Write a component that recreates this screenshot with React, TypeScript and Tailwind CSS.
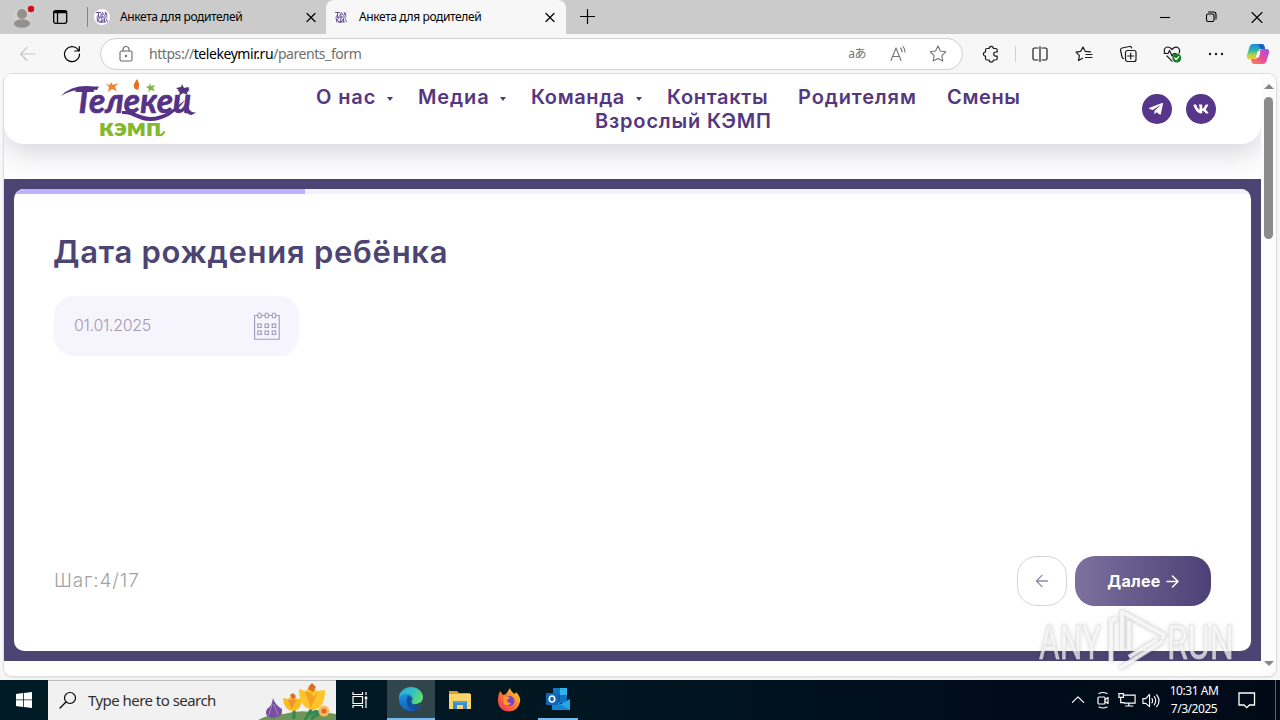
import type { ReactNode } from "react";
import { clsx } from "clsx";
import { FaTelegramPlane, FaVk } from "react-icons/fa";

interface IconProps {
  size?: number;
  className?: string;
  width?: number;
  children: ReactNode;
}

const Icon = ({ size = 20, className, width = 1.1, children }: IconProps) => (
  <svg
    width={size}
    height={size}
    viewBox="0 0 20 20"
    fill="none"
    stroke="currentColor"
    strokeWidth={width}
    strokeLinecap="round"
    strokeLinejoin="round"
    className={clsx("block shrink-0", className)}
  >
    {children}
  </svg>
);

const CloseIcon = () => (
  <Icon width={1.2}>
    <path d="M6 6.500l8 8M14 6.500l-8 8" />
  </Icon>
);

const Favicon = () => (
  <svg width="16" height="16" viewBox="0 0 16 16" className="block shrink-0">
    <circle cx="8" cy="8" r="8" fill="#fbfaff" />
    <g fill="none" stroke="#67539a" strokeWidth="1">
      <path d="M2 3.500h5M4.500 3v4M6.500 6.500l2-3 2 3M11 3l2 4M13 3.500l-2 3M2.500 8h11M3.500 6.500l2 3M8 5v4" />
      <path d="M3 9l1 4.500M3.500 11l3-2.500M4 11l3 2.500M8 9l-.5 4.500 3-4V13M12 9.500l1.500 3.500M5 13h7" />
    </g>
  </svg>
);

interface BrowserTabProps {
  active?: boolean;
}

const BrowserTab = ({ active }: BrowserTabProps) => (
  <div
    className={clsx(
      "flex h-[34px] items-center pl-[7px]",
      active ? "w-[240px] rounded-t-lg bg-[#f7f7f7]" : "w-[239px]"
    )}
  >
    <Favicon />
    <span className="ml-[10px] w-[181px] text-[12px] leading-4 tracking-[-0.38px] whitespace-nowrap text-black">
      Анкета для родителей
    </span>
    <CloseIcon />
  </div>
);

const TabStrip = () => (
  <div className="flex h-[34px] items-center bg-[#cbcbcb] text-black">
    <svg width="26" height="24" viewBox="0 0 26 24" className="ml-[11px]">
      <circle cx="11" cy="12" r="10" fill="#d2d0ce" />
      <circle cx="11" cy="9" r="5" fill="#93908e" />
      <ellipse cx="11" cy="18.500" rx="8" ry="4.200" fill="#93908e" />
      <circle cx="20" cy="4" r="3.200" fill="#d80b1c" />
    </svg>
    <Icon className="ml-[13px]" width={1.3}>
      <rect x="3.700" y="3.700" width="13" height="12.600" rx="2" />
      <path d="M7.500 5.500V16" />
      <path d="M4.500 5h11.500" strokeWidth={2.400} />
    </Icon>
    <div className="ml-[17px] h-5 w-px bg-[#858585]" />
    <div className="-ml-[1px] flex">
      <BrowserTab />
      <BrowserTab active />
    </div>
    <Icon className="ml-[11px]" width={1.2}>
      <path d="M3.500 9.500h14M10.500 2.500v14" />
    </Icon>
    <div className="mr-[13px] ml-auto flex items-center gap-[26px]">
      <Icon>
        <path d="M5 10.500h10" strokeLinecap="butt" />
      </Icon>
      <Icon>
        <rect x="5.500" y="7" width="7.500" height="7.500" rx="1.500" />
        <path d="M7.500 5h5a2.500 2.500 0 0 1 2.500 2.500V12" />
      </Icon>
      <Icon>
        <path d="M5 5.500l10 10M15 5.500l-10 10" />
      </Icon>
    </div>
  </div>
);

const STAR = "M10 2l2.400 5 5.400.8-3.900 3.800.9 5.400L10 14.500 5.200 17l.9-5.400L2.200 7.800 7.600 7z";

const CopilotLogo = () => (
  <svg width="24" height="22" viewBox="0 0 24 22" className="block">
    <defs>
      <linearGradient id="copilotLeft" x1="0" y1="0" x2="0" y2="1">
        <stop offset="0" stopColor="#1689e8" />
        <stop offset=".45" stopColor="#35b8a5" />
        <stop offset=".75" stopColor="#b9d543" />
        <stop offset="1" stopColor="#f6c51f" />
      </linearGradient>
      <linearGradient id="copilotRight" x1="1" y1="0" x2="0" y2="1">
        <stop offset="0" stopColor="#9a52e8" />
        <stop offset=".5" stopColor="#ec4a9c" />
        <stop offset="1" stopColor="#fb8a4e" />
      </linearGradient>
    </defs>
    <path d="M7 1h9q2 0 2.500 2.500L19 6h-4q-2 0-2.500 2l-1.600 5.500Q10 16 7.500 16H4q-4 0-3-4L3.500 4Q4.500 1 7 1z" fill="url(#copilotLeft)" />
    <path d="M17 21H8q-2 0-2.500-2.500L5 16h4q2 0 2.500-2l1.600-5.500Q14 6 16.500 6H20q4 0 3 4l-2.500 8Q19.500 21 17 21z" fill="url(#copilotRight)" />
    <path d="M12 1h4q2 0 2.500 2.500L19 6h-4.500z" fill="#1560c8" />
    <path d="M11.500 8.500h3l-1.600 6h-3z" fill="#fff" />
  </svg>
);

const Toolbar = () => (
  <div className="flex h-[40px] items-center bg-[#f7f7f7] text-[#1b1b1b]">
    <Icon className="ml-[18px] text-[#c6c6c6]" size={20}>
      <path d="M17 10H2.500M9 3.500L2.500 10 9 16.500" />
    </Icon>
    <Icon className="ml-[24px] text-black" size={20} width={1.2}>
      <path d="M16.800 7A7.500 7.500 0 1 0 17.500 10M17.300 2.500V7h-4.500" />
    </Icon>
    <div className="ml-[18px] flex h-[32px] w-[863px] items-center rounded-full border border-[#cfcfcf] bg-white pl-[15px]">
      <Icon className="text-[#6b6b6b]">
        <rect x="4" y="7" width="12" height="10" rx="1.500" />
        <path d="M7 7V5.500a3 3 0 0 1 6 0V7" />
        <circle cx="10" cy="12" r=".6" fill="currentColor" />
      </Icon>
      <span className="ml-[13px] text-[14px] leading-5 tracking-[-0.44px] text-[#6f6f6f]">
        https://<span className="text-black">telekeymir.ru</span>/parents_form
      </span>
      <div className="mr-[14px] ml-auto flex items-center text-[#747474]">
        <span className="text-[12px] leading-5 tracking-[-0.5px]">aあ</span>
        <Icon className="ml-[22px]">
          <path d="M3 16.500L8 4l5 12.500M5 12.500h6M12.500 4a5 5 0 0 1 1.500 4M15 2.500a8 8 0 0 1 2 5.500" />
        </Icon>
        <Icon className="ml-[20px]">
          <path d={STAR} />
        </Icon>
      </div>
    </div>
    <Icon className="ml-[18px]" width={1.2}>
      <path d="M6 4.500h2.200a2.100 2.100 0 0 1 4.200 0h2.300a1.500 1.500 0 0 1 1.500 1.500v2h-1.400a2 2 0 0 0 0 4.200h1.400v2.300a1.500 1.500 0 0 1-1.500 1.500h-2.300a2.100 2.100 0 0 1-4.200 0H6a1.500 1.500 0 0 1-1.500-1.500v-2.300a2.100 2.100 0 0 1 0-4.200V6A1.500 1.500 0 0 1 6 4.500z" />
    </Icon>
    <div className="ml-[14px] h-4 w-px bg-[#cfcfcf]" />
    <Icon className="ml-[14px]" width={1.2}>
      <path d="M8 4H4.500A1.500 1.500 0 0 0 3 5.500v9A1.500 1.500 0 0 0 4.500 16H8M12 4h3.500A1.500 1.500 0 0 1 17 5.500v9a1.500 1.500 0 0 1-1.500 1.500H12M10 2.500v15" />
    </Icon>
    <Icon className="ml-[24px]" width={1.2}>
      <path d="M8.500 14.200L4.500 16.500l.9-4.900L2 8.100l4.700-.7L9 3l2.100 4.300 5.400.5M12 10.500H18M11.500 13.500H18" />
    </Icon>
    <Icon className="ml-[24px]" width={1.2}>
      <rect x="7.500" y="6.500" width="10.500" height="11" rx="2" />
      <path d="M12.700 9v6M9.700 12h6M5.500 14.500A2 2 0 0 1 4 13L2.500 6a2 2 0 0 1 1.500-2l7.500-1.500q1.700-.3 2.200 1.500" />
    </Icon>
    <Icon className="ml-[24px]" width={1.2}>
      <path d="M3 9C.5 4.500 5 1.500 8.500 4L10 5.500 11.500 4C15 1.500 19 4.500 17.200 9M5 12l5 5.200M2 9.500h4l1.500-3L10 12l1.500-2.500H14" />
      <circle cx="14.800" cy="14" r="4.500" fill="#128026" stroke="none" />
      <path d="M12.700 14l1.500 1.500 2.600-2.800" stroke="#fff" />
    </Icon>
    <Icon className="ml-[24px]">
      <g fill="currentColor" stroke="none">
        <circle cx="4" cy="10" r="1.200" />
        <circle cx="10" cy="10" r="1.200" />
        <circle cx="16" cy="10" r="1.200" />
      </g>
    </Icon>
    <div className="ml-[20px]">
      <CopilotLogo />
    </div>
  </div>
);

const Logo = () => (
  <svg width="140" height="60" viewBox="0 0 140 60" className="block overflow-visible">
    <path d="M1 18Q12 6 34 8.500l5 0-2 3.500Q14 9 1 18z" fill="#553285" />
    <path d="M62 33c12-1 17 5 28 6 14 0 24-8 35-17-9 13-21 21-35 21-12 0-18-8-28-7z" fill="#553285" />
    <path d="M128 29q3 7 8 5-5 6-10 0z" fill="#553285" />
    <text
      x="14"
      y="35"
      fill="#553285"
      stroke="#553285"
      strokeWidth=".7"
      fontFamily="Lato, sans-serif"
      fontSize="34"
      fontWeight="700"
      fontStyle="italic"
      textLength="117"
      lengthAdjust="spacingAndGlyphs"
    >
      Телекей
    </text>
    <path d="M51 4l2 3 5-2-3 4 2 4-5-2-4 3 1-5-3-3 4 1z" fill="#ec8431" />
    <path d="M75 11c-3-3 0-7 2-10 2 3 3 7 1 11z" fill="#ec6f20" />
    <path d="M90 5l1 3 4-1-2 3 2 3-4-1-3 2 1-3-3-2 3-1z" fill="#80b744" />
    <path d="M122 6l2 4 5-1-3 4 2 4-5-2-4 3 1-5-4-3 5-1z" fill="#573480" />
    <text
      x="39"
      y="58"
      fill="#84b92c"
      fontFamily="Lato, sans-serif"
      fontSize="24"
      fontWeight="800"
      textLength="62"
      lengthAdjust="spacingAndGlyphs"
    >
      кэмп
    </text>
    <path d="M99 57q3 1 5-3" fill="none" stroke="#84b92c" strokeWidth="2" strokeLinecap="round" />
  </svg>
);

const navItems = [
  { label: "О нас", className: "w-[60px] tracking-[0.9px]", gap: "mr-[25px]", menu: true },
  { label: "Медиа", className: "w-[71px] tracking-[0.9px]", gap: "mr-[25px]", menu: true },
  { label: "Команда", className: "w-[94px] tracking-[0.6px]", gap: "mr-[25px]", menu: true },
  { label: "Контакты", className: "w-[101px] tracking-[0.65px]", gap: "mr-[30px]" },
  { label: "Родителям", className: "w-[119px] tracking-[0.88px]", gap: "mr-[30px]" },
  { label: "Смены", className: "w-[74px] tracking-[0.65px]", gap: "" },
];

const SiteHeader = () => (
  <header className="relative flex h-[70px] items-start rounded-b-[20px] bg-white shadow-[0_8px_30px_rgba(54,48,90,0.22)]">
    <div className="mt-[4px] ml-[56px]">
      <Logo />
    </div>
    <nav className="mt-[11px] ml-[116px] w-[706px] font-[Inter,sans-serif] text-[20px] leading-6 font-semibold whitespace-nowrap text-[#553780]">
      <div className="flex">
        {navItems.map((item) => (
          <a key={item.label} className={clsx("flex items-center", item.gap)}>
            <span className={item.className}>{item.label}</span>
            {item.menu && (
              <span className="mt-[3px] ml-[11px] border-x-[3px] border-t-4 border-x-transparent border-t-[#553780]" />
            )}
          </a>
        ))}
      </div>
      <a className="ml-[279px] block tracking-[0.83px]">Взрослый КЭМП</a>
    </nav>
    <div className="mt-[20px] ml-[120px] flex gap-[14px] text-white">
      <a className="flex size-[30px] items-center justify-center rounded-full bg-[#56358a]">
        <FaTelegramPlane size={16} className="mr-[2px]" />
      </a>
      <a className="flex size-[30px] items-center justify-center rounded-full bg-[#56358a]">
        <FaVk size={16} />
      </a>
    </div>
  </header>
);

const CalendarIcon = () => (
  <svg width="26" height="28" viewBox="0 0 26 28" fill="none" stroke="#a19bbd" strokeWidth="1.100" className="block">
    <path d="M4 3.500H.6v23.700h24.600V3.500H22M7.500 3.500h3.500M15 3.500h3.500" />
    {[3.800, 11, 18.200].map((x) => (
      <g key={x}>
        <rect x={x} y="1" width="3.500" height="5" rx="1.700" />
        <rect x={x} y="12" width="3.500" height="3.500" />
        <rect x={x} y="19" width="3.500" height="3.500" />
      </g>
    ))}
  </svg>
);

const FormStep = () => (
  <section className="mt-[35px] h-[482px] bg-[#4c4573] p-[10px]">
    <div className="flex h-full flex-col overflow-hidden rounded-[10px] bg-white font-[Inter,sans-serif]">
      <div className="h-[5px] bg-[#f3effd]">
        <div className="h-full w-[291px] bg-[#c0b0fa]" />
      </div>
      <div className="flex grow flex-col px-10 pb-[45px]">
        <h1 className="mt-[38px] -ml-px text-[31px] leading-[40px] font-semibold tracking-[0.73px] whitespace-nowrap text-[#4c4573]">
          Дата рождения ребёнка
        </h1>
        <div className="mt-[24px] flex h-[60px] w-[245px] items-center justify-between rounded-[20px] bg-[#f6f4fd] pr-[19px] pl-5">
          <span className="-mt-[2px] text-[16px] leading-6 font-light tracking-[-0.3px] text-[#a09cae]">01.01.2025</span>
          <CalendarIcon />
        </div>
        <div className="mt-auto flex h-[50px] items-center">
          <span className="text-[19px] leading-6 font-light tracking-[0.9px] text-[#a2a2a2]">Шаг:4/17</span>
          <button className="ml-auto flex h-[50px] w-[50px] items-center justify-center rounded-[20px] border border-[#d5d2df] text-[#8f88ad]">
            <Icon size={14} width={1.8}>
              <path d="M18 10H2M10 2l-8 8 8 8" />
            </Icon>
          </button>
          <button className="ml-2 flex h-[50px] w-[136px] items-center justify-center gap-[5px] rounded-[20px] bg-gradient-to-r from-[#7c719e] to-[#4c4175] text-[16px] font-bold tracking-[0.3px] text-white">
            Далее
            <Icon size={13} width={2.3}>
              <path d="M1.500 10h17M10 1.500l8.500 8.500-8.500 8.500" />
            </Icon>
          </button>
        </div>
      </div>
    </div>
  </section>
);

const Scrollbar = () => (
  <div className="flex w-[15px] flex-col items-center bg-[#fcfcfc]">
    <div className="mt-[10px] border-x-[5px] border-b-[5px] border-x-transparent border-b-[#868686]" />
    <div className="mt-[8px] h-[142px] w-[9px] rounded-full bg-[#8b8b8b]" />
    <div className="mt-auto mb-[10px] border-x-[5px] border-t-[5px] border-x-transparent border-t-[#868686]" />
  </div>
);

const PLAY_MARK = "M73 58V17l5-3M84 46V8l42 23-2 4M82 64l43-27M91 53l28-17M91 17v29";

const Watermark = () => (
  <div className="absolute top-[604px] left-[1038px] h-[74px] w-[200px] drop-shadow-[0_0_2px_rgba(0,0,0,0.22)]">
    <svg width="200" height="74" viewBox="0 0 200 74" className="overflow-visible">
      <g
        fill="#fff"
        fillOpacity=".7"
        stroke="#dddbe0"
        strokeOpacity=".6"
        strokeWidth=".9"
        fontFamily="Roboto, sans-serif"
        fontSize="49"
      >
        <text x="1" y="55" textLength="62" lengthAdjust="spacingAndGlyphs">
          ANY
        </text>
        <text x="129" y="55" textLength="67" lengthAdjust="spacingAndGlyphs">
          RUN
        </text>
      </g>
      <g fill="none" strokeLinejoin="round">
        <path d={PLAY_MARK} stroke="#dcdae0" strokeWidth="5.500" opacity=".55" />
        <path d={PLAY_MARK} stroke="#fff" strokeWidth="3.800" opacity=".75" />
      </g>
    </svg>
  </div>
);

const Flowers = () => (
  <svg width="80" height="38" viewBox="0 0 80 38" className="block self-end">
    <path d="M2 38Q14 31 28 32q17-5 32-1 10-1 20 1v6z" fill="#6f9559" />
    <path d="M17 16q2 7 9 11 1 8-8 9-11-1-7-9 5-3 6-11z" fill="#7850a2" />
    <path d="M16 22l-3 11M18 22l4 11" stroke="#a787c7" strokeWidth="1" />
    <path d="M38 26v11M56 26l-7 12M53 33q8-6 10-2l-8 6" stroke="#30894f" strokeWidth="3" fill="none" />
    <path d="M27 16l5 1 5-5 4 5 5-1q0 11-8 13-10 0-11-13z" fill="#f9bd22" />
    <path d="M32 18l4 9 4-9" fill="#ee942a" />
    <path d="M34 13l3-2 3 3-3 4z" fill="#dd6e24" />
    <path d="M43 7l6 2 7-5 5 5 8-1q0 18-11 20-15-1-15-21z" fill="#fec52a" />
    <path d="M49 10l6 16 7-16-4 5-4-5z" fill="#f3a024" />
    <path d="M53 4l3-3 4 4-3 5-5-3z" fill="#dd6e24" />
    <circle cx="68" cy="29" r="5.500" fill="#ffb75c" />
    <circle cx="68" cy="29" r="2.500" fill="#d56b22" />
  </svg>
);

const EdgeLogo = () => (
  <svg width="26" height="26" viewBox="0 0 26 26">
    <defs>
      <linearGradient id="edgeTop" x1="0" y1="0" x2="1" y2="0.4">
        <stop offset="0" stopColor="#2ba8dc" />
        <stop offset=".6" stopColor="#35c1c0" />
        <stop offset="1" stopColor="#5bdd73" />
      </linearGradient>
      <linearGradient id="edgeSide" x1="0" y1="0" x2="0" y2="1">
        <stop offset="0" stopColor="#1b94df" />
        <stop offset="1" stopColor="#1161bd" />
      </linearGradient>
    </defs>
    <path d="M1 13C1 8 6 7 10 8l4 3-1 4 5 5 5-1c-2 4-6 6-10 6C6 25 1 20 1 13z" fill="url(#edgeSide)" />
    <path d="M1 12C1 5 7 1 13 1c7 0 12 5 12 10 0 5-4 7-8 7-3 0-4-1-3-3 2-3-1-7-5-7-4 0-7 2-8 4z" fill="url(#edgeTop)" />
    <path d="M10 10c-3 5-1 13 6 14.500 3-1 6-3 7-5.500-6 2-12-1-10-6 .5-2-1-3-3-3z" fill="#124f9b" />
  </svg>
);

const FolderLogo = () => (
  <svg width="24" height="24" viewBox="0 0 24 24">
    <path d="M1 3h8l2 2h11v5H1z" fill="#dca02e" />
    <path d="M1 6h22v15H1z" fill="#fbd46a" />
    <path d="M5 21v-8h14v8h-4v-4H9v4z" fill="#3a8ccc" />
    <path d="M6 14h12" stroke="#69b8e6" />
  </svg>
);

const FirefoxLogo = () => (
  <svg width="26" height="26" viewBox="0 0 26 26">
    <defs>
      <linearGradient id="foxBody" x1="1" y1="0" x2="0" y2="1">
        <stop offset="0" stopColor="#ffdf38" />
        <stop offset=".5" stopColor="#ff7b2c" />
        <stop offset="1" stopColor="#ec2468" />
      </linearGradient>
    </defs>
    <path d="M4 4l3 4 3-1q2-3 4-6 1 4 5 6l1-2q5 5 4 10-2 9-11 9.500Q3 24 2 15 1.500 9 4 4z" fill="url(#foxBody)" />
    <circle cx="13.500" cy="14" r="5" fill="#7844cc" />
    <path d="M7 10q4-2 7 1l-3 2q0 3 4 3-3 4-7 1z" fill="#ff9a2b" />
  </svg>
);

const OutlookLogo = () => (
  <svg width="26" height="24" viewBox="0 0 26 24">
    <path d="M8 1h14v15H8z" fill="#1173c4" />
    <path d="M15 1h7v7h-7z" fill="#35b1ec" />
    <path d="M8 8h7v7H8z" fill="#1257a5" />
    <path d="M7 13l9 4 9-5v11H7z" fill="#27a5e7" />
    <path d="M7 13l18 10H7z" fill="#1584d1" />
    <rect x="1" y="6" width="12" height="12" rx="1" fill="#0f67b8" />
    <ellipse cx="7" cy="12" rx="2.700" ry="3" fill="none" stroke="#fff" strokeWidth="1.600" />
  </svg>
);

const Taskbar = () => (
  <footer className="flex h-[40px] bg-[linear-gradient(90deg,#001b25_0%,#001722_45%,#000d1d_75%,#000a17_100%)] text-white">
    <div className="flex w-[48px] items-center justify-center">
      <svg width="16" height="16" viewBox="0 0 16 16" fill="#fff">
        <path d="M0 2l7-1v6.500H0zM7.800 1L16 0v7.500H7.800zM0 8.300h7V15l-7-1zM7.800 8.300H16V16l-8.200-1z" />
      </svg>
    </div>
    <div className="flex w-[288px] items-center border-t border-[#bcbcbc] bg-[#f1f1f1] text-[#303030]">
      <Icon className="ml-[10px] text-black" size={20} width={1.2}>
        <circle cx="12" cy="7" r="5.500" />
        <path d="M8 11L2 17" />
      </Icon>
      <span className="-mt-[2px] ml-[10px] w-[130px] text-[15px] leading-5 tracking-[-0.54px] whitespace-nowrap">
        Type here to search
      </span>
      <div className="ml-auto self-end">
        <Flowers />
      </div>
    </div>
    <div className="flex w-[51px] items-center pl-[14px]">
      <Icon size={20} width={1.2}>
        <path d="M3 2v2.500h9.500V2M3 18v-2.500h9.500V18M3 6.500h9.500v7H3zM16 2v3M16 10v8" strokeLinecap="butt" strokeLinejoin="miter" />
        <path d="M16 6.500v3" strokeWidth="2.500" strokeLinecap="butt" />
      </Icon>
    </div>
    <div className="flex w-[48px] items-center justify-center border-b-2 border-[#76b9ed] bg-[#31454d]">
      <EdgeLogo />
    </div>
    <div className="flex w-[49px] items-center justify-center">
      <FolderLogo />
    </div>
    <div className="flex w-[49px] items-center justify-center">
      <FirefoxLogo />
    </div>
    <div className="ml-[5px] flex w-[40px] items-center justify-center border-b-2 border-[#76b9ed]">
      <OutlookLogo />
    </div>
    <div className="ml-auto flex items-center">
      <Icon size={14} width={1.7}>
        <path d="M2 13.500l8-8 8 8" />
      </Icon>
      <Icon className="ml-[8px]" size={20} width={1.2}>
        <rect x="5" y="7" width="7" height="7" rx="1" />
        <path d="M12 9.500l3-2v6l-3-2M6 3.500q4-2 8 0M6 17q4 2 8 0" />
      </Icon>
      <Icon className="ml-[5px]" size={18} width={1.3}>
        <path d="M7 4.500h12v9H7M3 7v6h4M12 13.500v3M8.500 16.700h8M1 3h5v4H1z" strokeLinejoin="miter" />
      </Icon>
      <Icon className="ml-[5px]" size={19} width={1.2}>
        <path d="M2 8v5h3l4 3.500v-13L5 8zM11.500 8q1.500 2.200 0 4.500M14 6q3 4.200 0 8.500M16.500 4q5 6.200 0 12.500" />
      </Icon>
      <div className="ml-[4px] w-[60px] text-center text-[12px] leading-[18px] tracking-[-0.45px] whitespace-nowrap">
        <div>10:31 AM</div>
        <div>7/3/2025</div>
      </div>
      <Icon className="ml-[13px]" size={20} width={1.3}>
        <path d="M2 3h15.500v12h-5l-2.800 2.700L7 15H2z" strokeLinejoin="miter" />
      </Icon>
      <div className="ml-[18px] h-10 w-px bg-[#596068]" />
      <div className="w-[4px]" />
    </div>
  </footer>
);

export default function App() {
  return (
    <div className="relative flex h-[720px] w-[1280px] flex-col overflow-hidden bg-[#f7f7f7] font-['Noto_Sans','Noto_Sans_CJK_JP',sans-serif]">
      <TabStrip />
      <Toolbar />
      <div className="mx-1 mb-[4px] flex h-[602px] overflow-hidden rounded-[8px] bg-white shadow-[0_0_0_1px_#dedede,0_1px_3px_rgba(0,0,0,0.15)]">
        <main className="w-[1257px] overflow-hidden">
          <SiteHeader />
          <FormStep />
        </main>
        <Scrollbar />
      </div>
      <Taskbar />
      <Watermark />
    </div>
  );
}
